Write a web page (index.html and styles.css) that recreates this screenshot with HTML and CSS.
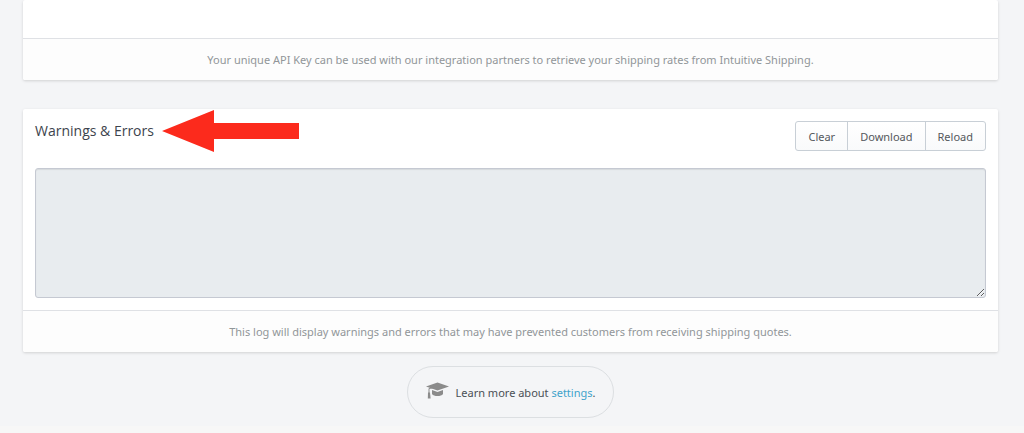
FILE: index.html
```
<!DOCTYPE html>
<html lang="en">
<head>
    <meta charset="UTF-8">
    <title>Settings</title>
    <link rel="stylesheet" href="styles.css">
</head>
<body>
<main class="page">
    <section class="card api-card">
        <div class="card-body"></div>
        <p class="card-footer">Your unique API Key can be used with our integration partners to retrieve your shipping rates from Intuitive Shipping.</p>
    </section>

    <section class="card">
        <div class="card-body">
            <div class="card-header">
                <h2><label for="log">Warnings &amp; Errors</label></h2>
                <svg class="arrow" width="138" height="42" viewBox="0 0 138 42" aria-hidden="true">
                    <path d="M0 21 52 0v13h85v16H52v13z" fill="#fc2a1c"/>
                </svg>
                <div class="btn-group">
                    <button type="button">Clear</button>
                    <button type="button">Download</button>
                    <button type="button">Reload</button>
                </div>
            </div>
            <textarea id="log" class="log" readonly></textarea>
        </div>
        <p class="card-footer">This log will display warnings and errors that may have prevented customers from receiving shipping quotes.</p>
    </section>

    <div class="learn-more">
        <svg class="cap" width="23" height="17" viewBox="0 0 23 17" aria-hidden="true">
            <path d="M11.5 0.5 0 4.5l11.5 4 11.5-4z" fill="#8b8b8b"/>
            <path d="M6 8v4c1 1.600 3 2 5.500 2s4.500-.4 5.500-2V8l-5.500 2z" fill="#8b8b8b"/>
            <path d="M11.500 5 3 6.500V12" fill="none" stroke="#8b8b8b"/>
            <path d="M2 10.500h2l.6 6H1.800z" fill="#8b8b8b"/>
        </svg>
        <span>Learn more about <a href="#">settings</a>.</span>
    </div>
</main>
</body>
</html>
```

FILE: styles.css
```
* { box-sizing: border-box; }
body {
    margin: 0;
    background: #f7f7f7;
    font-family: 'Segoe UI', 'Noto Sans', 'Open Sans', sans-serif;
    font-size: 11px;
    line-height: 17px;
    color: #4a4f55;
}
.page {
    padding: 0 26px 8px 23px;
    background: #f4f5f7;
}
.card {
    margin-bottom: 29px;
    background: #fff;
    border-radius: 2px;
    box-shadow: 0 1px 3px rgba(0, 0, 0, 0.15);
}
.card-body { padding: 12px; }
.api-card .card-body { height: 38px; }
.card-footer {
    margin: 0;
    padding: 12px;
    background: #fdfdfd;
    border-top: 1px solid #dfe1e5;
    border-radius: 0 0 2px 2px;
    color: #919699;
    text-align: center;
}
.card-header {
    display: flex;
    align-items: flex-start;
    margin-bottom: 17px;
}
h2 {
    margin: 0;
    font-family: 'Segoe UI', 'Open Sans', sans-serif;
    font-size: 14px;
    font-weight: 500;
    line-height: 20px;
    color: #3d444d;
}
.arrow {
    margin: -11px 0 -11px 8px;
}
.btn-group {
    display: flex;
    margin-left: auto;
}
.btn-group button {
    height: 30px;
    padding: 0 12px;
    background: linear-gradient(#fff, #f9fafb);
    border: 1px solid #c8cfd6;
    margin-left: -1px;
    font: inherit;
    color: #55585c;
    cursor: pointer;
}
.btn-group button:first-child { border-radius: 3px 0 0 3px; }
.btn-group button:last-child { border-radius: 0 3px 3px 0; }
.btn-group button:hover { background: #f4f5f7; }
.log {
    display: block;
    width: 100%;
    height: 130px;
    padding: 8px;
    background: #e8ecef;
    border: 1px solid #c5c9d2;
    border-radius: 3px;
    box-shadow: inset 0 1px 1px rgba(0, 0, 0, 0.08);
    font: inherit;
    resize: vertical;
}
.learn-more {
    display: flex;
    align-items: center;
    gap: 7px;
    width: fit-content;
    height: 52px;
    margin: -15px auto 0;
    padding: 0 18px;
    border: 1px solid #dcdfe2;
    border-radius: 26px;
}
.cap { margin-bottom: 4px; }
.learn-more a {
    color: #3fa3cb;
    text-decoration: none;
}
```
